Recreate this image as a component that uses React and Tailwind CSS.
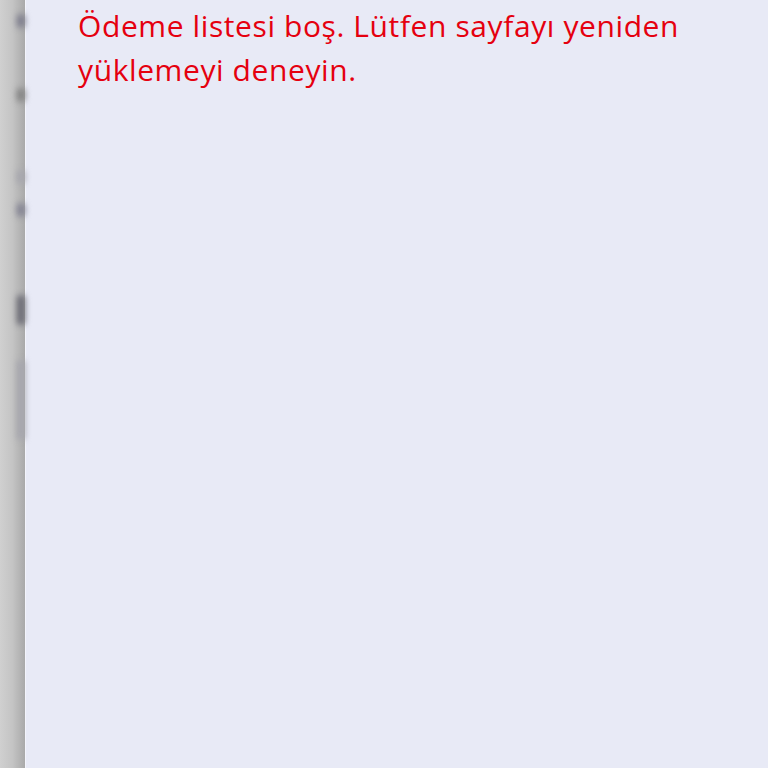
const spots = [
    { h: 'h-[14px]', mt: 'mt-[14px]', c: 'bg-[#7a7a8a]' },
    { h: 'h-[14px]', mt: 'mt-[60px]', c: 'bg-[#808080]' },
    { h: 'h-[14px]', mt: 'mt-[68px]', c: 'bg-[#a5a5ad]' },
    { h: 'h-[14px]', mt: 'mt-[19px]', c: 'bg-[#808090]' },
    { h: 'h-[30px]', mt: 'mt-[78px]', c: 'bg-[#666670]' },
    { h: 'h-[80px]', mt: 'mt-[35px]', c: 'bg-[#a5a5ad]' },
];

export default function App() {
    return (
        <div className="flex h-[768px] w-[768px] overflow-hidden">
            {/* blurred side strip */}
            <div className="flex w-[25px] shrink-0 flex-col items-end bg-gradient-to-r from-[#d0d0d0] via-[#c4c4c4] to-[#a9a9a9]">
                {spots.map((s, i) => (
                    <div key={i} className={`${s.h} ${s.mt} ${s.c} w-[8px] rounded-full blur-[3px]`} />
                ))}
            </div>
            <div className="flex-1 border-l border-[#f3f4fb] bg-[#e8eaf6] pl-[52px] pr-[46px] pt-[4px]">
                <p className="text-[30px] font-medium leading-[44px] tracking-[0.6px] text-[#e5000f]" style={{ fontFamily: '"Open Sans", "Noto Sans", sans-serif' }}>
                    Ödeme listesi boş. Lütfen sayfayı yeniden yüklemeyi deneyin.
                </p>
            </div>
        </div>
    );
}
